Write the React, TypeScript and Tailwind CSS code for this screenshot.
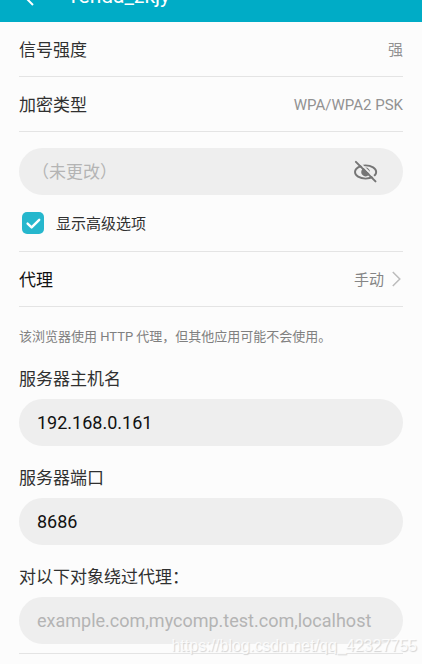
import React, { useState } from 'react';

const InfoRow: React.FC<{ label: string; value: string }> = ({ label, value }) => (
  <div className="flex h-[55px] items-center justify-between border-b border-[#e4e4e4] pt-[3px]">
    <span className="text-[17px] text-[#303030]">{label}</span>
    <span className="text-[15px] text-[#929292]">{value}</span>
  </div>
);

interface FieldProps {
  id: string;
  label: string;
  value: string;
  placeholder?: string;
  onChange: (value: string) => void;
}

const Field: React.FC<FieldProps> = ({ id, label, value, placeholder, onChange }) => (
  <div className="flex flex-col gap-[7px]">
    <label htmlFor={id} className="text-[17px] leading-[26px] text-[#303030]">
      {label}
    </label>
    <input
      id={id}
      type="text"
      value={value}
      placeholder={placeholder}
      onChange={(e) => onChange(e.target.value)}
      className="h-[47px] w-full rounded-full bg-[#eeeeee] px-[18px] text-[18px] text-[#111111] outline-none placeholder:text-[#b4b4b4]"
    />
  </div>
);

const EyeOffIcon: React.FC = () => (
  <svg width="26" height="24" viewBox="0 0 26 24" fill="none" stroke="#757575" strokeLinecap="round">
    <ellipse cx="12.6" cy="12" rx="10.6" ry="6.6" strokeWidth="1.9" />
    <circle cx="12.6" cy="12" r="4.4" fill="#757575" stroke="none" />
    <path d="M13.2 9.7c1 .2 1.7.9 1.9 1.9" stroke="#eeeeee" strokeWidth="1.1" />
    <path d="M4.4.6 24.2 20.1" stroke="#eeeeee" strokeWidth="1.8" />
    <path d="M2.9 1.9 22.5 21.4" strokeWidth="2" />
  </svg>
);

const App: React.FC = () => {
  const [password, setPassword] = useState('');
  const [showPassword, setShowPassword] = useState(false);
  const [advanced, setAdvanced] = useState(true);
  const [host, setHost] = useState('192.168.0.161');
  const [port, setPort] = useState('8686');
  const [bypass, setBypass] = useState('');

  return (
    <div className="relative min-h-screen overflow-hidden border-r-4 border-white bg-[#fcfcfc] font-[Roboto,'Noto_Sans_CJK_SC',sans-serif]">
      {/* Title bar, scrolled mostly out of view */}
      <header className="flex h-[22px] items-end overflow-hidden bg-[#00acc6] px-[19px]">
        <div className="flex h-[50px] shrink-0 items-center gap-8 text-white">
          <button type="button" aria-label="Back">
            <svg width="16" height="18" viewBox="0 0 16 18" fill="none" stroke="currentColor" strokeWidth="2">
              <path d="M14 1 6 9l8 8" />
            </svg>
          </button>
          <h1 className="text-[21px] font-normal">Tenda_zkjy</h1>
        </div>
      </header>

      <main className="px-[19px]">
        <InfoRow label="信号强度" value="强" />
        <InfoRow label="加密类型" value="WPA/WPA2 PSK" />

        <div className="mt-4 flex h-[47px] items-center rounded-full bg-[#eeeeee] pr-6 pl-[13px]">
          <input
            type={showPassword ? 'text' : 'password'}
            aria-label="密码"
            value={password}
            placeholder="（未更改）"
            onChange={(e) => setPassword(e.target.value)}
            className="min-w-0 flex-1 pt-[3px] text-[17px] outline-none placeholder:text-[#b4b4b4]"
          />
          <button type="button" aria-label="显示密码" onClick={() => setShowPassword(!showPassword)}>
            <EyeOffIcon />
          </button>
        </div>

        <div className="flex h-[57px] items-center border-b border-[#e4e4e4] pl-[3px]">
          <label className="flex items-center gap-3 text-[15px] text-[#303030]">
            <span className="grid">
              <input
                type="checkbox"
                checked={advanced}
                onChange={(e) => setAdvanced(e.target.checked)}
                className="peer col-start-1 row-start-1 size-[22px] appearance-none rounded-[5px] bg-[#d0d0d0] checked:bg-[#26b7cd]"
              />
              <svg
                className="pointer-events-none invisible col-start-1 row-start-1 size-[22px] peer-checked:visible"
                viewBox="0 0 22 22"
                fill="none"
                stroke="white"
                strokeWidth="2.4"
                strokeLinecap="round"
                strokeLinejoin="round"
              >
                <path d="m5.6 11.6 4 3.8 7.6-7.6" />
              </svg>
            </span>
            <span className="pt-[2px]">显示高级选项</span>
          </label>
        </div>

        <button
          type="button"
          className="flex h-[55px] w-full items-center justify-between border-b border-[#e4e4e4]"
        >
          <span className="pt-[3px] text-[17px] text-[#111111]">代理</span>
          <span className="flex items-center gap-2 pr-[2px] text-[15px] text-[#858585]">
            <span className="pt-[3px]">手动</span>
            <svg width="9" height="16" viewBox="0 0 9 16" fill="none" stroke="#bcbcbc" strokeWidth="1.5">
              <path d="m.8 1 7 7-7 7" />
            </svg>
          </span>
        </button>

        <p className="flex h-[59px] items-center text-[13px] text-[#808080]">
          该浏览器使用 HTTP 代理，但其他应用可能不会使用。
        </p>

        <div className="flex flex-col gap-[19px] border-b border-[#e4e4e4] pb-[9px]">
          <Field id="host" label="服务器主机名" value={host} onChange={setHost} />
          <Field id="port" label="服务器端口" value={port} onChange={setPort} />
          <Field
            id="bypass"
            label="对以下对象绕过代理："
            value={bypass}
            placeholder="example.com,mycomp.test.com,localhost"
            onChange={setBypass}
          />
        </div>
      </main>

      <span className="pointer-events-none absolute right-[5px] bottom-[6px] font-['Liberation_Sans',sans-serif] text-[16px] text-white/80 [text-shadow:1px_1px_1px_#d2d2d2]">
        https://blog.csdn.net/qq_42327755
      </span>
    </div>
  );
};

export default App;
